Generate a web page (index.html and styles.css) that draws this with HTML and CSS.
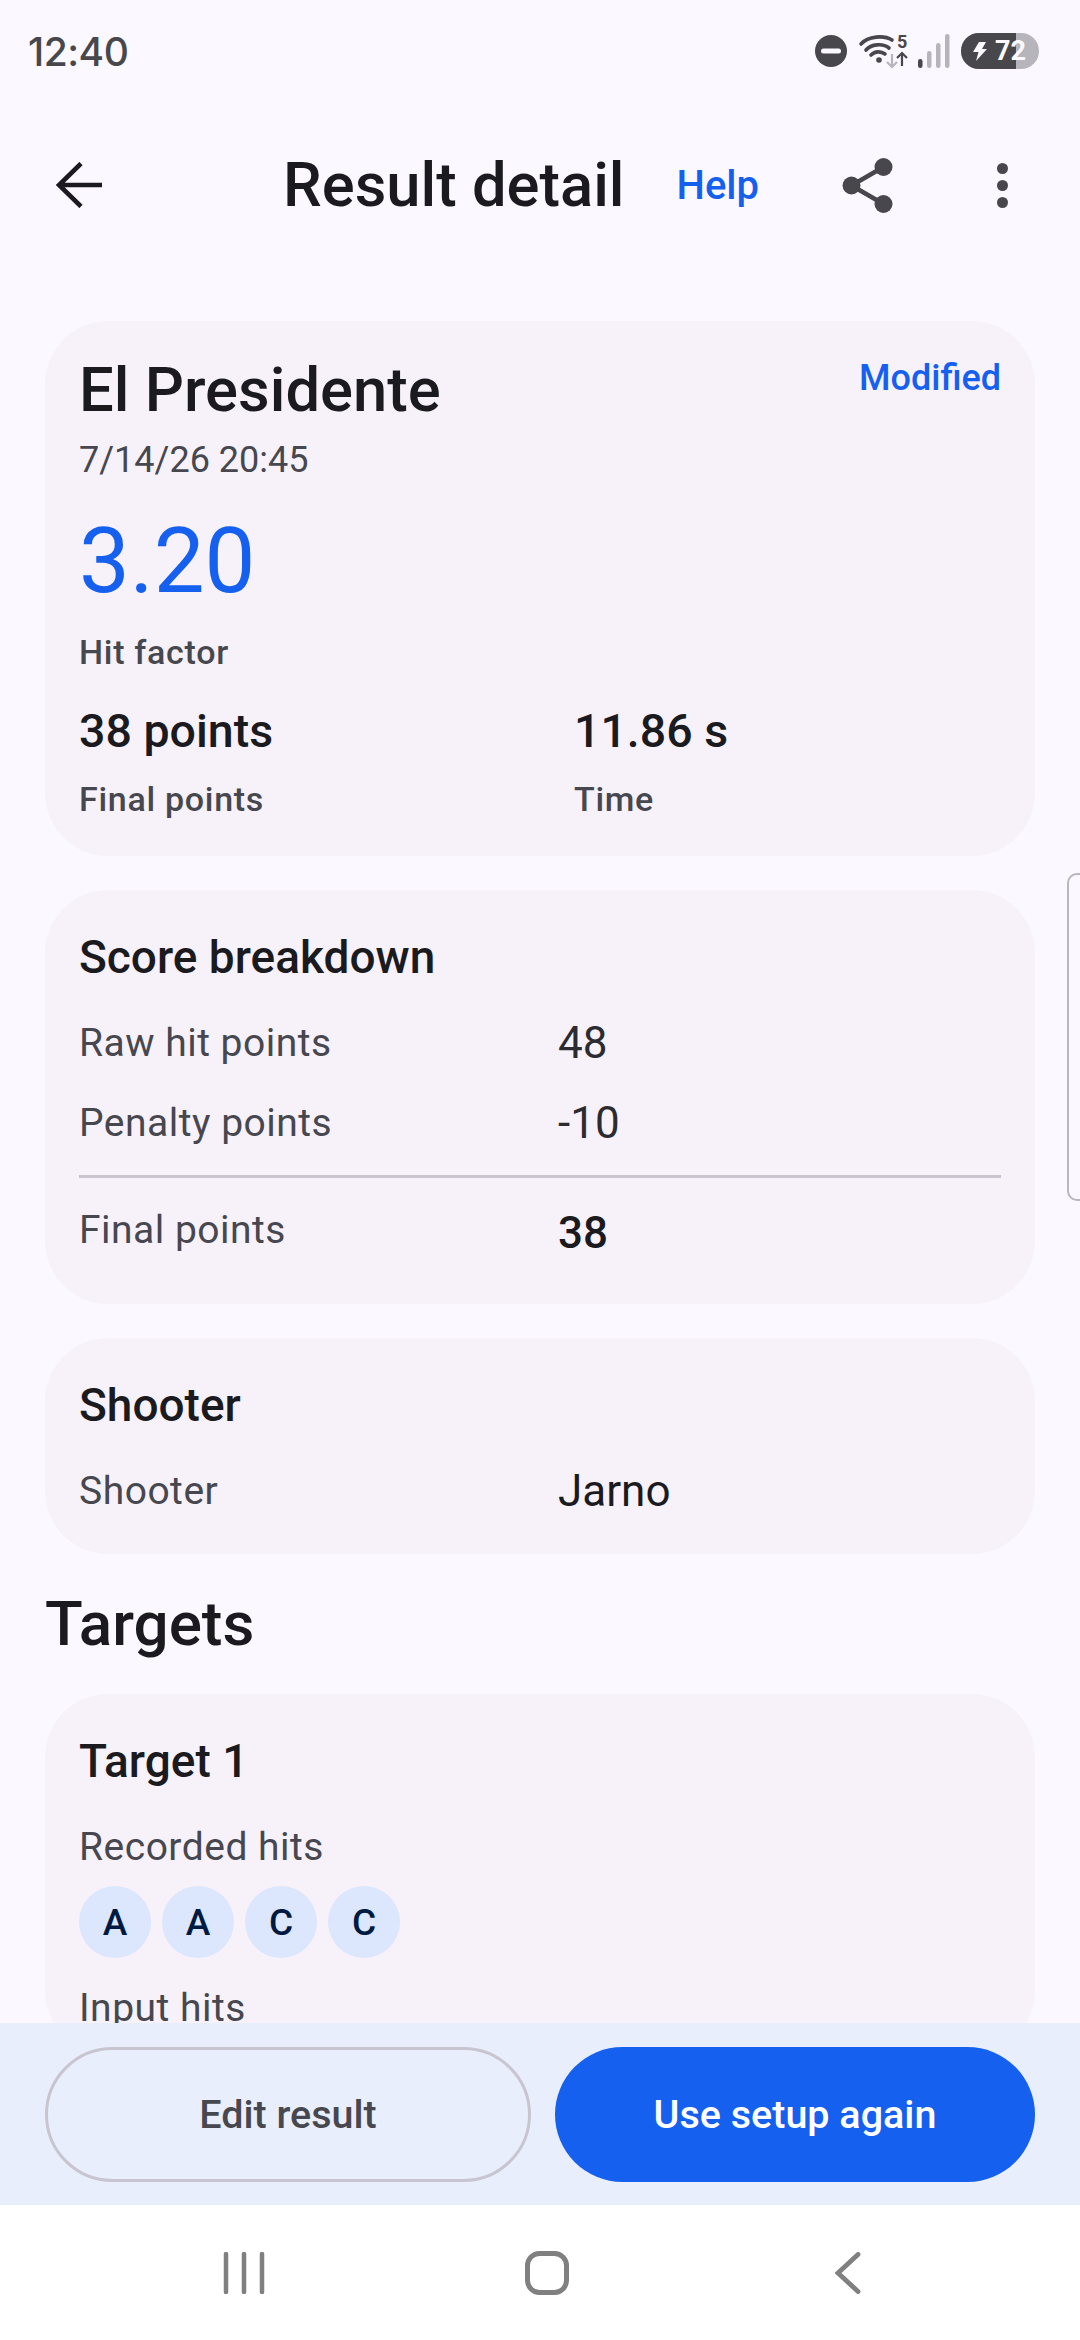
FILE: index.html
```html
<!DOCTYPE html>
<html lang="en">
<head>
    <meta charset="UTF-8">
    <title>Result detail</title>
    <link rel="stylesheet" href="styles.css">
</head>
<body>
    <div class="edge-handle"></div>
    <div class="statusbar">
        <span class="clock">12:40</span>
        <div class="status-icons">
            <svg class="ic-dnd" viewBox="0 0 32 32"><circle cx="16" cy="16" r="16" fill="#47474c"/><rect x="6" y="13.5" width="20" height="5" rx="2.5" fill="#fbf9ff"/></svg>
            <svg class="ic-wifi" viewBox="0 0 48 34">
                <g fill="none" stroke="#47474c" stroke-width="3.6" stroke-linecap="round">
                    <path d="M2 10C9 2 25 1 33 6"/>
                    <path d="M7 16C12 10 24 9 30 14"/>
                    <path d="M12 21C16 17 22 17 26 20"/>
                </g>
                <circle cx="20" cy="26" r="2.8" fill="#47474c"/>
                <g fill="none" stroke-width="2.2">
                    <path d="M33 20V33M28 28L33 33L38 28" stroke="#b6b5bb"/>
                    <path d="M43 32V19M38 24L43 19L48 24" stroke="#47474c"/>
                </g>
                <text x="38" y="14" class="wifi-five">5</text>
            </svg>
            <svg class="ic-signal" viewBox="0 0 32 34">
                <rect x="0" y="25" width="4.5" height="9" rx="2.2" fill="#47474c"/>
                <rect x="9" y="17" width="4.5" height="17" rx="2.2" fill="#b6b5bb"/>
                <rect x="18" y="9" width="4.5" height="25" rx="2.2" fill="#b6b5bb"/>
                <rect x="27" y="0" width="4.5" height="34" rx="2.2" fill="#b6b5bb"/>
            </svg>
            <div class="battery">
                <div class="battery-fill"></div>
                <svg class="ic-bolt" viewBox="0 0 16 19"><path d="M8 0H15L11 7H16L5 19L7.5 10H2Z" fill="#fbf9ff"/></svg>
                <span class="battery-num">72</span>
            </div>
        </div>
    </div>

    <header class="topbar">
        <svg class="ic-back" viewBox="0 0 46 46"><path d="M46 23H4M25 1.5L3 23L25 44.5" fill="none" stroke="#1b1b1f" stroke-width="4.6"/></svg>
        <h1 class="page-title">Result detail</h1>
        <span class="help">Help</span>
        <svg class="ic-share" viewBox="0 0 51 55">
            <path d="M41.5 9L9.5 27.5L41.5 46" fill="none" stroke="#47474c" stroke-width="4.6"/>
            <circle cx="41.5" cy="9" r="9" fill="#47474c"/>
            <circle cx="9.5" cy="27.5" r="9" fill="#47474c"/>
            <circle cx="41.5" cy="46" r="9" fill="#47474c"/>
        </svg>
        <div class="ic-more"><i></i><i></i><i></i></div>
    </header>

    <main class="scroll">
        <section class="card">
            <div class="summary-head">
                <h2 class="summary-title">El Presidente</h2>
                <span class="modified">Modified</span>
            </div>
            <p class="summary-date">7/14/26 20:45</p>
            <p class="hit-factor">3.20</p>
            <p class="small-label">Hit factor</p>
            <div class="summary-cols">
                <div class="summary-col">
                    <p class="summary-value">38 points</p>
                    <p class="small-label">Final points</p>
                </div>
                <div class="summary-col">
                    <p class="summary-value">11.86 s</p>
                    <p class="small-label">Time</p>
                </div>
            </div>
        </section>

        <section class="card">
            <h3 class="card-title">Score breakdown</h3>
            <div class="row first"><span class="row-label">Raw hit points</span><span class="row-value">48</span></div>
            <div class="row"><span class="row-label">Penalty points</span><span class="row-value">-10</span></div>
            <hr class="divider">
            <div class="row total"><span class="row-label">Final points</span><span class="row-value strong">38</span></div>
        </section>

        <section class="card">
            <h3 class="card-title">Shooter</h3>
            <div class="row first"><span class="row-label">Shooter</span><span class="row-value dark">Jarno</span></div>
        </section>

        <h2 class="section-title">Targets</h2>

        <section class="card">
            <h3 class="card-title">Target 1</h3>
            <p class="hits-label recorded">Recorded hits</p>
            <div class="chips">
                <span class="chip">A</span>
                <span class="chip">A</span>
                <span class="chip">C</span>
                <span class="chip">C</span>
            </div>
            <p class="hits-label input">Input hits</p>
        </section>
    </main>

    <div class="actions">
        <button class="btn btn-outline">Edit result</button>
        <button class="btn btn-primary">Use setup again</button>
    </div>

    <nav class="navbar">
        <svg class="ic-recent" viewBox="0 0 42 42"><path d="M3 2V40M21 2V40M39 2V40" fill="none" stroke="#808080" stroke-width="4.5" stroke-linecap="round"/></svg>
        <svg class="ic-home" viewBox="0 0 44 44"><rect x="2.5" y="2.5" width="39" height="39" rx="12" fill="none" stroke="#808080" stroke-width="5"/></svg>
        <svg class="ic-navback" viewBox="0 0 26 42"><path d="M23 2.5L3 21L23 39.5" fill="none" stroke="#808080" stroke-width="4.8" stroke-linecap="round"/></svg>
    </nav>
</body>
</html>
```

FILE: styles.css
```css
* {
    margin: 0;
    padding: 0;
    box-sizing: border-box;
    font-family: 'Roboto', sans-serif;
}
html, body {
    width: 1080px;
    height: 2340px;
    overflow: hidden;
}
body {
    position: relative;
    display: flex;
    flex-direction: column;
    background-color: #fbf9ff;
    color: #1b1b1f;
}
.edge-handle {
    position: absolute;
    right: -4px;
    top: 873px;
    width: 17px;
    height: 328px;
    border: 2px solid #b8b8bc;
    border-radius: 10px 0 0 10px;
    z-index: 5;
}

/* status bar */
.statusbar {
    height: 105px;
    flex-shrink: 0;
    display: flex;
    align-items: center;
    justify-content: space-between;
    padding: 0 41px 3px 28px;
}
.clock {
    font-size: 39px;
    font-weight: 500;
    color: #47474c;
    font-family: 'Inter', sans-serif;
    letter-spacing: -0.5px;
}
.status-icons {
    display: flex;
    align-items: center;
}
.ic-dnd {
    width: 32px;
    height: 32px;
    margin-right: 12px;
}
.ic-wifi {
    width: 48px;
    height: 34px;
    margin-right: 11px;
    overflow: visible;
}
.wifi-five {
    font-size: 18px;
    font-weight: 700;
    fill: #47474c;
}
.ic-signal {
    width: 32px;
    height: 34px;
    margin-right: 11px;
}
.battery {
    position: relative;
    width: 78px;
    height: 36px;
    border-radius: 18px;
    background-color: #b6b5bb;
    overflow: hidden;
    display: flex;
    align-items: center;
}
.battery-fill {
    position: absolute;
    left: 0;
    top: 0;
    bottom: 0;
    width: 55px;
    background-color: #47474c;
}
.ic-bolt {
    position: relative;
    width: 16px;
    height: 19px;
    margin-left: 10px;
}
.battery-num {
    position: relative;
    margin-left: 8px;
    font-size: 27px;
    font-weight: 700;
    color: #fbf9ff;
}

/* top bar */
.topbar {
    height: 160px;
    flex-shrink: 0;
    display: flex;
    align-items: center;
}
.ic-back {
    width: 46px;
    height: 46px;
    margin-left: 56px;
}
.page-title {
    margin-left: 181px;
    font-size: 61.5px;
    font-weight: 500;
}
.help {
    margin-left: 52px;
    font-size: 40px;
    font-weight: 500;
    color: #1660f0;
}
.ic-share {
    width: 51px;
    height: 55px;
    margin-left: 83px;
}
.ic-more {
    display: flex;
    flex-direction: column;
    gap: 6px;
    margin-left: 104px;
}
.ic-more i {
    display: block;
    width: 11px;
    height: 11px;
    border-radius: 50%;
    background-color: #47474c;
}

/* scrolling content */
.scroll {
    flex: 1;
    min-height: 0;
    overflow: hidden;
    display: flex;
    flex-direction: column;
    gap: 34px;
    padding: 56px 45px 0;
}
.card {
    flex-shrink: 0;
    background-color: #f7f2fa;
    border-radius: 63px;
    padding: 41px 34px 23px;
}
.summary-head {
    display: flex;
    justify-content: space-between;
    align-items: flex-start;
}
.summary-title {
    font-size: 61.5px;
    font-weight: 500;
    line-height: 56px;
}
.modified {
    margin-top: -5px;
    font-size: 36px;
    font-weight: 500;
    color: #1660f0;
}
.summary-date {
    margin-top: 20px;
    font-size: 36px;
    line-height: 44px;
    color: #47474f;
}
.hit-factor {
    margin-top: 27px;
    margin-bottom: 17px;
    font-size: 90.5px;
    line-height: 104px;
    color: #1660f0;
}
.small-label {
    font-size: 34px;
    line-height: 44px;
    font-weight: 500;
    color: #47474f;
    letter-spacing: 0.7px;
}
.summary-cols {
    display: flex;
    margin-top: 29px;
    padding-bottom: 12px;
}
.summary-col {
    flex: 0 0 495px;
}
.summary-value {
    font-size: 46.5px;
    line-height: 56px;
    font-weight: 500;
    margin-bottom: 18px;
}
.card-title {
    font-size: 46px;
    line-height: 52px;
    font-weight: 500;
}
.row {
    display: flex;
    align-items: center;
    height: 80px;
}
.row.first {
    margin-top: 20px;
}
.row.total {
    margin-top: 15px;
    margin-bottom: 8px;
}
.row.total .row-label {
    margin-bottom: 7px;
}
.row-label {
    width: 479px;
    font-size: 39px;
    color: #47474f;
    letter-spacing: 0.5px;
}
.row-value {
    font-size: 44px;
    color: #2b2b30;
}
.row-value.dark {
    color: #1b1b1f;
}
.row-value.strong {
    font-weight: 500;
    color: #1b1b1f;
}
.divider {
    border: 0;
    height: 3px;
    margin-top: 12px;
    background-color: #c8c5d0;
}
.section-title {
    font-size: 62px;
    line-height: 72px;
    font-weight: 500;
}
.hits-label {
    font-size: 39px;
    line-height: 46px;
    color: #47474f;
    letter-spacing: 0.5px;
}
.hits-label.recorded {
    margin-top: 37px;
}
.hits-label.input {
    margin-top: 27px;
}
.chips {
    display: flex;
    gap: 11px;
    margin-top: 16px;
}
.chip {
    width: 72px;
    height: 72px;
    border-radius: 50%;
    background-color: #dce6fd;
    color: #001a41;
    font-size: 37px;
    font-weight: 500;
    display: flex;
    align-items: center;
    justify-content: center;
}

/* bottom actions */
.actions {
    height: 182px;
    flex-shrink: 0;
    display: flex;
    gap: 24px;
    padding: 24px 45px 23px;
    background-color: #e9eefd;
}
.btn {
    flex: 1;
    border-radius: 68px;
    font-size: 39.5px;
    font-weight: 500;
}
.btn-outline {
    background: none;
    border: 3px solid #c8c5d0;
    color: #47474f;
}
.btn-primary {
    background-color: #1660f0;
    border: 0;
    color: #fff;
}
.navbar {
    height: 135px;
    flex-shrink: 0;
    display: flex;
    align-items: center;
    background-color: #fff;
}
.ic-recent {
    width: 42px;
    height: 42px;
    margin-left: 223px;
}
.ic-home {
    width: 44px;
    height: 44px;
    margin-left: 260px;
}
.ic-navback {
    width: 26px;
    height: 42px;
    margin-left: 266px;
}
```
